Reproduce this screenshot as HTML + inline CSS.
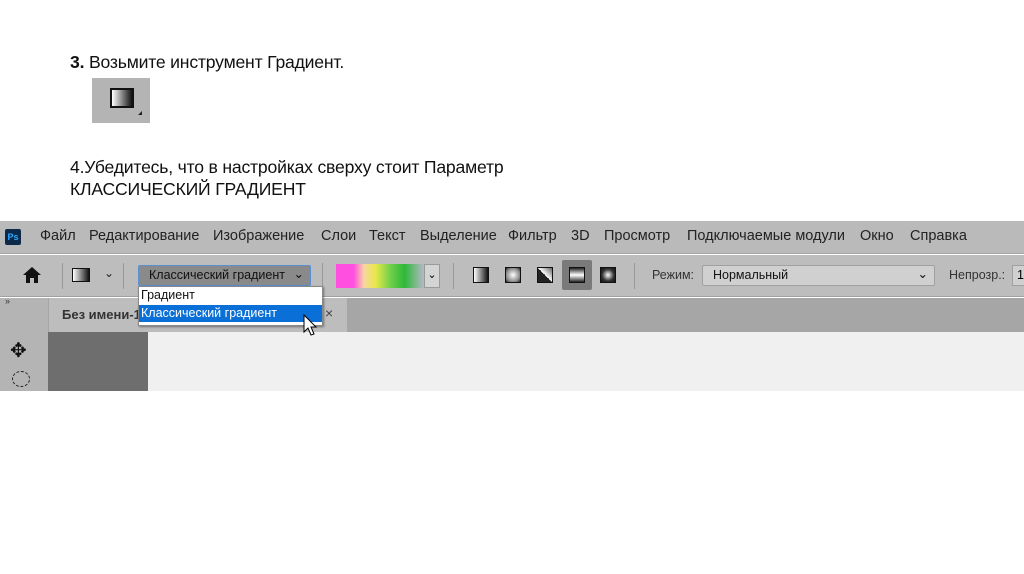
<!DOCTYPE html>
<html><head><meta charset="utf-8"><style>
*{margin:0;padding:0;box-sizing:border-box}
body{width:1024px;height:574px;background:#fff;position:relative;overflow:hidden;font-family:"Liberation Sans","DejaVu Sans",sans-serif;}
.a{position:absolute}
.t{font-size:17.6px;color:#111;white-space:nowrap;letter-spacing:-0.2px}
.m{font-size:14.5px;color:#222;white-space:nowrap}
.g{background:linear-gradient(90deg,#fff,#111);border:1.5px solid #111}
</style></head><body>
<div class="a t" style="left:70px;top:52px"><b>3.</b> Возьмите инструмент Градиент.</div>
<div class="a" style="left:92px;top:78px;width:58px;height:45px;background:#b4b4b4"></div>
<div class="a g" style="left:110px;top:88px;width:24px;height:20px;border-width:2px"></div>
<div class="a" style="left:138px;top:111px;width:0;height:0;border-left:4px solid transparent;border-bottom:4px solid #222"></div>
<div class="a t" style="left:70px;top:157px">4.Убедитесь, что в настройках сверху стоит Параметр</div>
<div class="a t" style="left:70px;top:179px">КЛАССИЧЕСКИЙ ГРАДИЕНТ</div>

<!-- menu bar -->
<div class="a" style="left:0;top:221px;width:1024px;height:33px;background:#bababa;border-bottom:1px solid #a8a8a8"></div>
<div class="a" style="left:5px;top:229px;width:16px;height:16px;background:#0b2a4a;border-radius:2px;color:#31a8ff;font-size:9px;font-weight:bold;text-align:center;line-height:16px">Ps</div>
<div class="a m" style="left:40px;top:228px">Файл</div>
<div class="a m" style="left:89px;top:228px">Редактирование</div>
<div class="a m" style="left:213px;top:228px">Изображение</div>
<div class="a m" style="left:321px;top:228px">Слои</div>
<div class="a m" style="left:369px;top:228px">Текст</div>
<div class="a m" style="left:420px;top:228px">Выделение</div>
<div class="a m" style="left:508px;top:228px">Фильтр</div>
<div class="a m" style="left:571px;top:228px">3D</div>
<div class="a m" style="left:604px;top:228px">Просмотр</div>
<div class="a m" style="left:687px;top:228px">Подключаемые модули</div>
<div class="a m" style="left:860px;top:228px">Окно</div>
<div class="a m" style="left:910px;top:228px">Справка</div>

<!-- options bar -->
<div class="a" style="left:0;top:255px;width:1024px;height:42px;background:#bdbdbd;border-bottom:1px solid #a0a0a0"></div>
<svg class="a" style="left:22px;top:266px" width="20" height="18" viewBox="0 0 20 18"><path d="M10 1 L19 9 L16 9 L16 17 L12 17 L12 12 L8 12 L8 17 L4 17 L4 9 L1 9Z" fill="#111"/></svg>
<div class="a" style="left:62px;top:263px;width:1px;height:26px;background:#999"></div>
<div class="a g" style="left:72px;top:268px;width:18px;height:14px"></div>
<div class="a m" style="left:104px;top:266px;font-size:12px">⌄</div>
<div class="a" style="left:123px;top:263px;width:1px;height:26px;background:#999"></div>
<div class="a" style="left:138px;top:265px;width:173px;height:21px;background:#8a8a8a;border:1px solid #5a8fd0;border-radius:2px;font-size:12.5px;color:#111;padding:2px 0 0 10px;white-space:nowrap">Классический градиент<span style="position:absolute;right:6px;top:0">⌄</span></div>
<div class="a" style="left:322px;top:263px;width:1px;height:26px;background:#999"></div>
<div class="a" style="left:336px;top:264px;width:88px;height:24px;background:linear-gradient(90deg,#ff4fe0 0%,#ff4fe0 20%,#f7d6a0 32%,#e8e84a 45%,#6fd04a 62%,#2eb83a 78%,#b8b8c8 100%)"></div>
<div class="a" style="left:424px;top:264px;width:16px;height:24px;background:#d4d4d4;border:1px solid #999;font-size:11px;text-align:center;line-height:20px">⌄</div>
<div class="a" style="left:453px;top:263px;width:1px;height:26px;background:#999"></div>
<div class="a g" style="left:473px;top:267px;width:16px;height:16px"></div>
<div class="a" style="left:505px;top:267px;width:16px;height:16px;border:1.5px solid #111;background:radial-gradient(circle,#fff 0%,#888 70%,#222 100%)"></div>
<div class="a" style="left:537px;top:267px;width:16px;height:16px;border:1.5px solid #111;background:linear-gradient(45deg,#222 50%,#fff 50%,#666)"></div>
<div class="a" style="left:562px;top:260px;width:30px;height:30px;background:#7a7a7a;border-radius:2px"></div>
<div class="a" style="left:569px;top:267px;width:16px;height:16px;border:1.5px solid #111;background:linear-gradient(180deg,#222,#fff,#222)"></div>
<div class="a" style="left:600px;top:267px;width:16px;height:16px;border:1.5px solid #111;background:radial-gradient(circle,#fff 0%,#333 60%,#111 100%)"></div>
<div class="a" style="left:634px;top:263px;width:1px;height:26px;background:#999"></div>
<div class="a m" style="left:652px;top:268px;font-size:12.5px;color:#333">Режим:</div>
<div class="a" style="left:702px;top:265px;width:233px;height:21px;background:#d0d0d0;border:1px solid #a0a0a0;border-radius:2px;font-size:12.5px;padding:2px 0 0 10px;color:#111">Нормальный<span style="position:absolute;right:6px;top:0">⌄</span></div>
<div class="a m" style="left:949px;top:268px;font-size:12.5px;color:#333">Непрозр.:</div>
<div class="a" style="left:1012px;top:265px;width:20px;height:21px;background:#d0d0d0;border:1px solid #a0a0a0;font-size:12.5px;padding:2px 0 0 4px">1</div>

<!-- tab bar -->
<div class="a" style="left:0;top:298px;width:1024px;height:34px;background:#a6a6a6"></div>
<div class="a" style="left:0;top:298px;width:48px;height:93px;background:#b4b4b4"></div>
<div class="a" style="left:49px;top:298px;width:298px;height:34px;background:#bdbdbd"></div>
<div class="a m" style="left:62px;top:307px;font-weight:bold;font-size:13px;color:#333">Без имени-1</div>
<div class="a m" style="left:325px;top:305px;font-size:14px;color:#444">×</div>
<div class="a m" style="left:5px;top:296px;font-size:9px;color:#333">»</div>
<div class="a m" style="left:10px;top:338px;font-size:20px;color:#111">✥</div>
<div class="a" style="left:12px;top:371px;width:18px;height:16px;border:1.5px dashed #222;border-radius:50%"></div>
<div class="a" style="left:48px;top:332px;width:100px;height:59px;background:#6e6e6e"></div>
<div class="a" style="left:148px;top:332px;width:876px;height:59px;background:#f0f0f0"></div>

<!-- dropdown -->
<div class="a" style="left:138px;top:286px;width:185px;height:40px;background:#fff;border:1px solid #888;box-shadow:1px 1px 2px rgba(0,0,0,.4)"></div>
<div class="a" style="left:141px;top:288px;font-size:12.5px;color:#111">Градиент</div>
<div class="a" style="left:139px;top:305px;width:183px;height:17px;background:#0a6fd6;color:#fff;font-size:12.5px;padding:1px 0 0 2px;white-space:nowrap">Классический градиент</div>
<svg class="a" style="left:303px;top:314px" width="16" height="24" viewBox="0 0 16 24"><path d="M1 1 L1 18 L5 14 L8 21 L11 20 L8 13 L13 13Z" fill="#fff" stroke="#000" stroke-width="1"/></svg>
</body></html>
